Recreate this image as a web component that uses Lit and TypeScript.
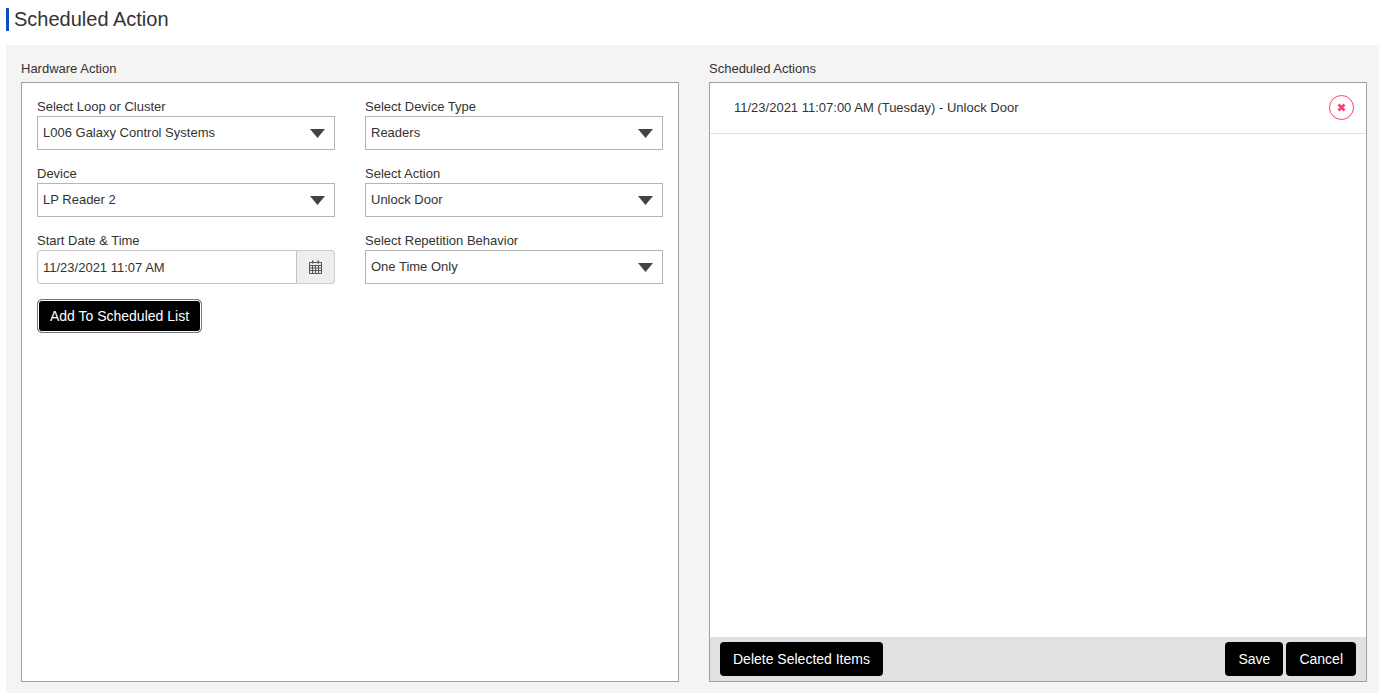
import { LitElement, html, css } from "lit";
import { customElement } from "lit/decorators.js";

const field = (label: string, value: string) => html`
  <div class="field">
    <label class="lbl">${label}</label>
    <div class="select">
      <span class="val">${value}</span>
      <svg class="arrow" width="15" height="9" viewBox="0 0 15 9"><path d="M0 0H15L7.5 9Z" fill="#444"></path></svg>
    </div>
  </div>`;

@customElement("app-root")
export class AppRoot extends LitElement {
  static styles = css`
    :host {
      display: flex;
      flex-direction: column;
      height: 693px;
      box-sizing: border-box;
      font-family: "Liberation Sans", Arial, sans-serif;
      font-size: 13px;
      color: #333;
      background: #fff;
      overflow: hidden;
    }
    .title {
      margin: 8px 0 14px 6px;
      height: 23px;
      border-left: 3px solid #0a50b8;
      padding-left: 5px;
      font-size: 20px;
      line-height: 22px;
      color: #333;
    }
    .panel {
      flex: 1;
      margin-left: 6px;
      background: #f4f4f4;
      padding: 15px 12px 11px 15px;
      display: grid;
      grid-template-columns: 658px 658px;
      column-gap: 30px;
      min-height: 0;
    }
    .col { display: flex; flex-direction: column; min-height: 0; }
    .heading { height: 22px; line-height: 17px; }
    .box {
      flex: 1;
      background: #fff;
      border: 1px solid #a0a0a0;
      box-sizing: border-box;
      display: flex;
      flex-direction: column;
      min-height: 0;
    }
    .form {
      padding: 15px 15px 0;
      display: grid;
      grid-template-columns: 298px 298px;
      column-gap: 30px;
      row-gap: 15px;
    }
    .field { display: flex; flex-direction: column; }
    .lbl { height: 18px; line-height: 17px; }
    .select, .input-group { height: 34px; box-sizing: border-box; }
    .select {
      border: 1px solid #b5b5b5;
      display: flex;
      align-items: center;
      justify-content: space-between;
      padding: 0 9px 0 5px;
    }
    .val { line-height: 16px; }
    .input-group { display: flex; }
    .input {
      flex: 1;
      border: 1px solid #c4c4c4;
      border-radius: 4px 0 0 4px;
      display: flex;
      align-items: center;
      padding-left: 5px;
    }
    .addon {
      width: 38px;
      box-sizing: border-box;
      border: 1px solid #ccc;
      border-left: 0;
      background: #eee;
      border-radius: 0 4px 4px 0;
      display: flex;
      align-items: center;
      justify-content: center;
    }
    .btn {
      background: #000;
      color: #fff;
      border: 0;
      border-radius: 4px;
      height: 34px;
      box-sizing: border-box;
      padding: 0 13px;
      font: inherit;
      font-size: 14px;
      display: inline-flex;
      align-items: center;
    }
    .btn.add {
      margin: 15px 0 0 15px;
      align-self: flex-start;
      border: 1px solid #777;
      box-shadow: inset 0 0 0 1px #fff;
      border-radius: 5px;
      width: 165px;
      justify-content: center;
      padding: 0;
    }
    .list { flex: 1; min-height: 0; }
    .item {
      height: 51px;
      box-sizing: border-box;
      border-bottom: 1px solid #e2e2e2;
      display: flex;
      align-items: center;
      justify-content: space-between;
      padding: 0 12px 1px 24px;
    }
    .footer {
      height: 44px;
      background: #e1e1e1;
      display: flex;
      align-items: center;
      padding: 0 10px;
      gap: 3px;
    }
    .spacer { flex: 1; }
    .remove { display: block; }
  `;

  render() {
    return html`
      <div class="title">Scheduled Action</div>
      <div class="panel">
        <section class="col">
          <div class="heading">Hardware Action</div>
          <div class="box">
            <div class="form">
              ${field("Select Loop or Cluster", "L006 Galaxy Control Systems")}
              ${field("Select Device Type", "Readers")}
              ${field("Device", "LP Reader 2")}
              ${field("Select Action", "Unlock Door")}
              <div class="field">
                <label class="lbl">Start Date &amp; Time</label>
                <div class="input-group">
                  <div class="input">11/23/2021 11:07 AM</div>
                  <div class="addon">
                    <svg width="13" height="14" viewBox="0 0 13 14">
                      <path d="M3 0.5h1.5v3H3zM8.5 0.5H10v3H8.5z" fill="#555"></path>
                      <path fill="none" stroke="#555" d="M0.5 2.5h12v11h-12zM0.5 5.5h12M0.5 8h12M0.5 10.5h12M3.5 5.5v8M6.5 5.5v8M9.5 5.5v8"></path>
                    </svg>
                  </div>
                </div>
              </div>
              ${field("Select Repetition Behavior", "One Time Only")}
            </div>
            <button class="btn add">Add To Scheduled List</button>
          </div>
        </section>
        <section class="col">
          <div class="heading">Scheduled Actions</div>
          <div class="box">
            <div class="list">
              <div class="item">
                <span>11/23/2021 11:07:00 AM (Tuesday) - Unlock Door</span>
                <svg class="remove" width="25" height="25" viewBox="0 0 25 25">
                  <circle cx="12.5" cy="12.5" r="12" fill="#fff" stroke="#ff3d71"></circle>
                  <path d="M9.5 9.5l6 6M15.5 9.5l-6 6" stroke="#ff3d71" stroke-width="2.8"></path>
                </svg>
              </div>
            </div>
            <div class="footer">
              <button class="btn">Delete Selected Items</button>
              <span class="spacer"></span>
              <button class="btn">Save</button>
              <button class="btn">Cancel</button>
            </div>
          </div>
        </section>
      </div>
    `;
  }
}
